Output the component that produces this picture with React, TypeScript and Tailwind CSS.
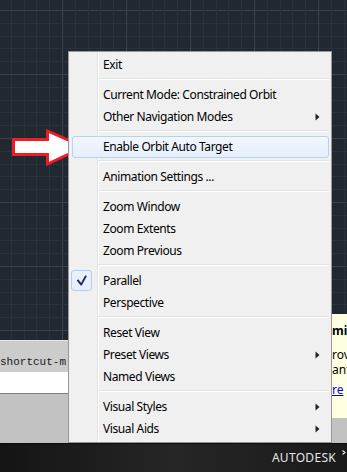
type Entry =
  | { label: string; sub?: boolean; checked?: boolean; active?: boolean }
  | "sep";

const menu: Entry[] = [
  { label: "Exit" },
  "sep",
  { label: "Current Mode: Constrained Orbit" },
  { label: "Other Navigation Modes", sub: true },
  "sep",
  { label: "Enable Orbit Auto Target", active: true },
  "sep",
  { label: "Animation Settings ..." },
  "sep",
  { label: "Zoom Window" },
  { label: "Zoom Extents" },
  { label: "Zoom Previous" },
  "sep",
  { label: "Parallel", checked: true },
  { label: "Perspective" },
  "sep",
  { label: "Reset View" },
  { label: "Preset Views", sub: true },
  { label: "Named Views" },
  "sep",
  { label: "Visual Styles", sub: true },
  { label: "Visual Aids", sub: true },
];

// drawing canvas grid, page coords so both pieces line up
function Grid({ w, h, dx = 0 }: { w: number; h: number; dx?: number }) {
  const step = 12.8;
  const lines = [];
  for (let k = -10; k < 40; k++) {
    const x = Math.round(62 + k * step - dx);
    if (x >= 0 && x < w) {
      lines.push(
        <line
          key={`v${k}`}
          x1={x + 0.5}
          x2={x + 0.5}
          y1={0}
          y2={h}
          stroke={k % 5 === 0 ? "#3a4352" : "#2a313c"}
        />
      );
    }
    const y = Math.round(10 + k * step);
    if (y >= 0 && y < h) {
      lines.push(
        <line
          key={`h${k}`}
          x1={0}
          x2={w}
          y1={y + 0.5}
          y2={y + 0.5}
          stroke={k % 5 === 0 ? "#3a4352" : "#2a313c"}
        />
      );
    }
  }
  return (
    <svg width={w} height={h} className="block bg-[#212830]" aria-hidden>
      {lines}
    </svg>
  );
}

function SubArrow() {
  return (
    <svg width="5" height="8" className="mr-[9px] shrink-0" aria-hidden>
      <polygon points="0.5,0.5 4.5,4 0.5,7.5" fill="#222" />
    </svg>
  );
}

function Check() {
  return (
    <div className="flex h-[21px] w-[21px] items-center justify-center rounded-[3px] border border-[#b1cdf2] bg-[#e9f0fa]">
      <svg width="21" height="21" className="-m-px" aria-hidden>
        <path
          d="M6.5 9.8 L10.2 14.6 L15 5.8"
          fill="none"
          stroke="#1f2a78"
          strokeWidth="1.9"
          strokeLinejoin="round"
        />
      </svg>
    </div>
  );
}

function ContextMenu() {
  return (
    <div className="absolute left-[68px] top-[51px] w-[264px] border border-[#979797] bg-[#f0f0f0] p-[2px] text-[12px] tracking-[-0.4px] text-black">
      <div className="absolute bottom-0 left-[28px] top-0 w-[2px] border-l border-[#e2e3e3] bg-white" />
      {menu.map((item, i) =>
        item === "sep" ? (
          <div key={i} className="relative h-[8px] pl-[27px] pt-[2px]">
            <div className="h-[2px] border-t border-[#e2e3e3] bg-white" />
          </div>
        ) : (
          <div
            key={i}
            className={
              item.active
                ? "relative ml-px flex h-[22px] items-center rounded-[3px] border border-[#b3d2f8] bg-linear-to-b from-[#f2f7fe] to-[#e6eefa]"
                : "relative flex h-[22px] items-center"
            }
          >
            <div
              className={
                item.active
                  ? "flex h-full w-[30px] shrink-0 items-start"
                  : "flex h-full w-[32px] shrink-0 items-start"
              }
            >
              {item.checked && <Check />}
            </div>
            <span className="flex-1 whitespace-nowrap leading-[16px]">{item.label}</span>
            {item.sub && <SubArrow />}
          </div>
        )
      )}
    </div>
  );
}

function RedArrow() {
  return (
    <svg
      width="90"
      height="42"
      className="absolute left-0 top-[127px]"
      aria-hidden
    >
      <polygon
        points="13.5,12.5 47.5,12.5 47.5,4 84,20 47.5,37 47.5,27.5 13.5,27.5"
        fill="#fff"
        stroke="#ee1c25"
        strokeWidth="3"
        strokeLinejoin="miter"
      />
    </svg>
  );
}

export default function App() {
  return (
    <div className="relative flex h-[472px] w-[347px] flex-col overflow-hidden bg-[#c3c3c3] font-['Noto_Sans',sans-serif]">
      <div className="flex h-[443px]">
        <div className="flex w-[331px] flex-col">
          <Grid w={331} h={340} />
          <div className="h-px bg-[#e6e6e6]" />
          <div className="flex h-[31px] items-end whitespace-nowrap bg-[#cccccc] pb-[3px] font-['Liberation_Mono',monospace] text-[11px] leading-[14px] text-[#1a1a1a]">
            shortcut-m
          </div>
          <div className="h-[22px] border-b border-[#808080] bg-white" />
          <div className="flex-1 bg-[#c2c2c2]" />
        </div>
        <div className="flex w-[16px] flex-col">
          <Grid w={16} h={314} dx={331} />
          <div className="h-[104px] overflow-hidden whitespace-nowrap bg-[#ffffe1] pl-px pt-[9px] text-[12px] leading-[15px] text-black">
            <p className="font-bold">min</p>
            <p className="mt-[9px]">rov</p>
            <p>ant</p>
            <p className="mt-[5px] text-[#0000ee] underline">re</p>
          </div>
          <div className="flex-1 bg-[#c2c2c2]" />
        </div>
      </div>
      <footer className="flex h-[29px] items-center justify-end border-t border-[#0c0c0c] bg-linear-to-r from-[#141414] via-[#262626] to-[#1a1a1a]">
        <span className="text-[12px] leading-[14px] tracking-[0.3px] text-[#e6e6e6]">
          AUTODESK
        </span>
        <svg width="6" height="20" className="ml-[5px] self-start" aria-hidden>
          <path d="M1.5 6.5 L4 8.5 L1.5 10.5" fill="none" stroke="#ddd" strokeWidth="1.2" />
        </svg>
      </footer>
      <RedArrow />
      <ContextMenu />
    </div>
  );
}
